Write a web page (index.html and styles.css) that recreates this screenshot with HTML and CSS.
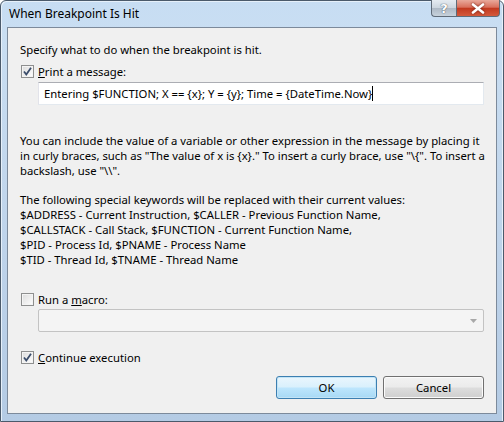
FILE: index.html
```html
<!DOCTYPE html>
<html>
<head>
<meta charset="utf-8">
<link rel="stylesheet" href="styles.css">
</head>
<body>
<div class="window">
  <div class="titlebar">
    <span class="title">When Breakpoint Is Hit</span>
    <div class="caption-buttons">
      <div class="cap-btn help">?</div>
      <div class="cap-btn close">
        <svg width="14" height="11" viewBox="0 0 14 11"><path d="M2 1.5 L12 9.5 M12 1.5 L2 9.5" stroke="#ffffff" stroke-width="2.6" stroke-linecap="round"/></svg>
      </div>
    </div>
  </div>
  <div class="client">
    <div class="intro">Specify what to do when the breakpoint is hit.</div>
    <label class="check-row print-row">
      <span class="checkbox checked"><svg width="11" height="11" viewBox="0 0 11 11"><path d="M2 5.5 L4.3 8.5 L9 1.8" fill="none" stroke="#3b4d6b" stroke-width="1.8"/></svg></span>
      <span><u>P</u>rint a message:</span>
    </label>
    <div class="textbox">Entering $FUNCTION; X == {x}; Y = {y}; Time = {DateTime.Now}<span class="caret"></span></div>
    <div class="para para1">You can include the value of a variable or other expression in the message by placing it<br>in curly braces, such as "The value of x is {x}." To insert a curly brace, use "\{". To insert a<br>backslash, use "\\".</div>
    <div class="para para2">The following special keywords will be replaced with their current values:<br>$ADDRESS - Current Instruction, $CALLER - Previous Function Name,<br>$CALLSTACK - Call Stack, $FUNCTION - Current Function Name,<br>$PID - Process Id, $PNAME - Process Name<br>$TID - Thread Id, $TNAME - Thread Name</div>
    <label class="check-row macro-row">
      <span class="checkbox"></span>
      <span>Run a <u>m</u>acro:</span>
    </label>
    <div class="combo"><svg class="arrow" width="7" height="4" viewBox="0 0 7 4"><path d="M0 0 L7 0 L3.5 4 Z" fill="#a8a8a8"/></svg></div>
    <label class="check-row continue-row">
      <span class="checkbox checked"><svg width="11" height="11" viewBox="0 0 11 11"><path d="M2 5.5 L4.3 8.5 L9 1.8" fill="none" stroke="#3b4d6b" stroke-width="1.8"/></svg></span>
      <span><u>C</u>ontinue execution</span>
    </label>
    <div class="buttons">
      <div class="btn default">OK</div>
      <div class="btn">Cancel</div>
    </div>
  </div>
</div>
</body>
</html>
```
FILE: styles.css
```css
html, body {
  margin: 0;
  padding: 0;
}
body {
  width: 504px;
  height: 422px;
  overflow: hidden;
  font-family: "Noto Sans", "Open Sans", sans-serif;
  font-size: 11.3px;
  color: #000;
}
.window {
  box-sizing: border-box;
  width: 504px;
  height: 422px;
  border: 1px solid #4b5a6b;
  border-radius: 6px 6px 0 0;
  background: linear-gradient(180deg, #c7ddf3 0%, #c9def2 8%, #bed3ea 60%, #b4cbe4 100%);
  display: flex;
  flex-direction: column;
  padding: 0 6px 7px 6px;
  box-shadow: inset 1px 1px 0 #e6f0fa, inset -1px 0 0 #e6f0fa;
}
.titlebar {
  height: 26px;
  display: flex;
  align-items: flex-start;
  justify-content: space-between;
}
.title {
  margin-left: 2px;
  margin-top: 5px;
  line-height: 16px;
  font-size: 12px;
  color: #000;
}
.caption-buttons {
  display: flex;
  margin-top: -1px;
  margin-right: -3px;
}
.cap-btn {
  height: 17px;
  box-sizing: border-box;
  border: 1px solid #5f6b78;
  border-top: none;
  display: flex;
  align-items: center;
  justify-content: center;
}
.help {
  width: 25px;
  border-radius: 0 0 0 4px;
  border-right: none;
  background: linear-gradient(180deg, #e5ebf1 0%, #cdd6df 48%, #aeb9c5 52%, #c7d2dc 100%);
  color: #ffffff;
  font-family: "DejaVu Sans", sans-serif;
  font-size: 13px;
  font-weight: bold;
  text-shadow: 0 0 1px #4a5868, 0 0 1px #4a5868;
}
.close {
  width: 44px;
  border-radius: 0 0 4px 0;
  background: linear-gradient(180deg, #e9a99b 0%, #d9705c 45%, #c2391f 52%, #d45a3c 100%);
}
.close svg {
  filter: drop-shadow(0 0 1px #6b1a0c);
}
.client {
  flex: 1;
  background: #f0f0f0;
  border: 1px solid #7c8a9b;
  padding: 0 12px 0 12px;
  display: flex;
  flex-direction: column;
}
.intro {
  margin-top: 14px;
  line-height: 15px;
}
.check-row {
  display: flex;
  align-items: center;
  gap: 4px;
  height: 15px;
  line-height: 15px;
  margin-left: 1px;
}
.print-row {
  margin-top: 7px;
}
.checkbox {
  box-sizing: border-box;
  width: 13px;
  height: 13px;
  border: 1px solid #8e8f8f;
  background: linear-gradient(135deg, #dcdcdc 0%, #f4f4f4 70%, #ffffff 100%);
  box-shadow: inset 0 0 0 1px #f4f4f4;
  display: flex;
  align-items: center;
  justify-content: center;
}
.textbox {
  margin-top: 3px;
  margin-left: 18px;
  height: 23px;
  box-sizing: border-box;
  border: 1px solid #abadb3;
  border-color: #abadb3 #e3e9ef #e3e9ef #e2e3ea;
  background: #ffffff;
  padding-left: 5px;
  line-height: 21px;
  white-space: nowrap;
  display: flex;
  align-items: center;
}
.caret {
  display: inline-block;
  width: 1px;
  height: 15px;
  background: #000;
}
.para {
  line-height: 15px;
  white-space: nowrap;
}
.para1 {
  margin-top: 28px;
}
.para2 {
  margin-top: 14px;
}
.macro-row {
  margin-top: 25px;
}
.combo {
  margin-top: 2px;
  margin-left: 18px;
  height: 23px;
  box-sizing: border-box;
  border: 1px solid #c3c3c3;
  border-radius: 2px;
  background: #f4f4f4;
  display: flex;
  align-items: center;
  justify-content: flex-end;
  padding-right: 6px;
}
.continue-row {
  margin-top: 18px;
}
.buttons {
  margin-top: 11px;
  display: flex;
  justify-content: flex-end;
  gap: 6px;
}
.btn {
  width: 101px;
  height: 23px;
  box-sizing: border-box;
  border: 1px solid #707070;
  border-radius: 3px;
  background: linear-gradient(180deg, #f2f2f2 0%, #ebebeb 49%, #dddddd 51%, #cfcfcf 100%);
  box-shadow: inset 0 0 0 1px #fbfbfb;
  display: flex;
  align-items: center;
  justify-content: center;
  line-height: 15px;
}
.btn.default {
  border-color: #3c7fb1;
  background: linear-gradient(180deg, #eaf6fd 0%, #d9f0fc 49%, #bee6fd 51%, #a7d9f5 100%);
  box-shadow: inset 0 0 0 1px #c3e4f6;
}
```
